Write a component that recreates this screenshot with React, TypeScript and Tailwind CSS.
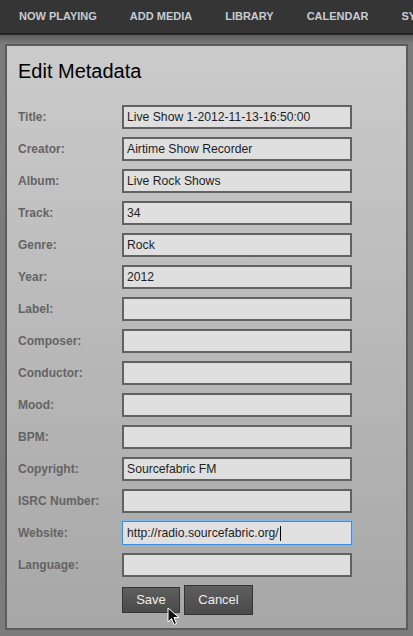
const navItems = ["NOW PLAYING", "ADD MEDIA", "LIBRARY", "CALENDAR", "SYSTEM"];

type Field = { label: string; value: string; focused?: boolean };

const fields: Field[] = [
  { label: "Title:", value: "Live Show 1-2012-11-13-16:50:00" },
  { label: "Creator:", value: "Airtime Show Recorder" },
  { label: "Album:", value: "Live Rock Shows" },
  { label: "Track:", value: "34" },
  { label: "Genre:", value: "Rock" },
  { label: "Year:", value: "2012" },
  { label: "Label:", value: "" },
  { label: "Composer:", value: "" },
  { label: "Conductor:", value: "" },
  { label: "Mood:", value: "" },
  { label: "BPM:", value: "" },
  { label: "Copyright:", value: "Sourcefabric FM" },
  { label: "ISRC Number:", value: "" },
  { label: "Website:", value: "http://radio.sourcefabric.org/", focused: true },
  { label: "Language:", value: "" },
];

export default function App() {
  return (
    <div
      className="h-[636px] w-[413px] overflow-hidden bg-[#7b7b7b]"
      style={{ fontFamily: '"Liberation Sans", Arial, sans-serif' }}
    >
      {/* top nav */}
      <div className="flex h-[35px] items-center gap-[33px] overflow-hidden whitespace-nowrap border-b-2 border-[#262626] bg-[#353535] pl-[19px] text-[11px] font-bold text-[#c8ccd4]">
        {navItems.map((item) => (
          <span key={item}>{item}</span>
        ))}
      </div>
      <div className="h-[9px] bg-gradient-to-b from-[#5e5e5e] to-[#7b7b7b]" />

      {/* dialog panel */}
      <div className="mx-[5px] h-[586px] border-2 border-[#5c5c5c] bg-gradient-to-b from-[#cbcbcb] to-[#a7a7a7] pl-[11px]">
        <h1 className="pt-[13px] text-[20px] leading-[24px] text-black">Edit Metadata</h1>

        <div className="mt-[22px] flex flex-col gap-[8px]">
          {fields.map((f) => (
            <div key={f.label} className="flex h-[24px] items-start">
              <label className="w-[104px] pt-[3px] text-[12px] font-bold text-[#646464]">
                {f.label}
              </label>
              <div
                className={
                  f.focused
                    ? "flex h-[24px] w-[230px] items-center border border-[#3a8fe0] bg-[#e0e0e0] pl-[4px] text-[12.2px] text-[#1e1e1e] shadow-[0_0_0_1px_#7fb6ea]"
                    : "flex h-[24px] w-[230px] items-center border-2 border-[#626262] bg-[#dfdfdf] pl-[3px] text-[12.2px] text-[#1e1e1e]"
                }
              >
                {f.value}
                {f.focused ? <span className="ml-[1px] h-[15px] w-px bg-black" /> : null}
              </div>
            </div>
          ))}
        </div>

        <div className="ml-[104px] mt-[8px] flex items-start gap-[4px]">
          <button
            type="button"
            className="relative mt-[2px] h-[26px] w-[58px] border border-[#343434] bg-gradient-to-b from-[#5e5e5e] to-[#4a4a4a] text-[13px] text-[#eeeeee]"
          >
            Save
            <svg
              className="absolute left-[44px] top-[19px]"
              width="13"
              height="19"
              viewBox="0 0 13 19"
            >
              <path
                d="M1 1 L1 15 L4.5 11.5 L7 17.5 L9.5 16.5 L7 10.5 L12 10.5 Z"
                fill="#111"
                stroke="#fff"
                strokeWidth="1"
              />
            </svg>
          </button>
          <button
            type="button"
            className="h-[30px] w-[69px] border border-[#343434] bg-gradient-to-b from-[#5e5e5e] to-[#4a4a4a] text-[13px] text-[#eeeeee]"
          >
            Cancel
          </button>
        </div>
      </div>
    </div>
  );
}
